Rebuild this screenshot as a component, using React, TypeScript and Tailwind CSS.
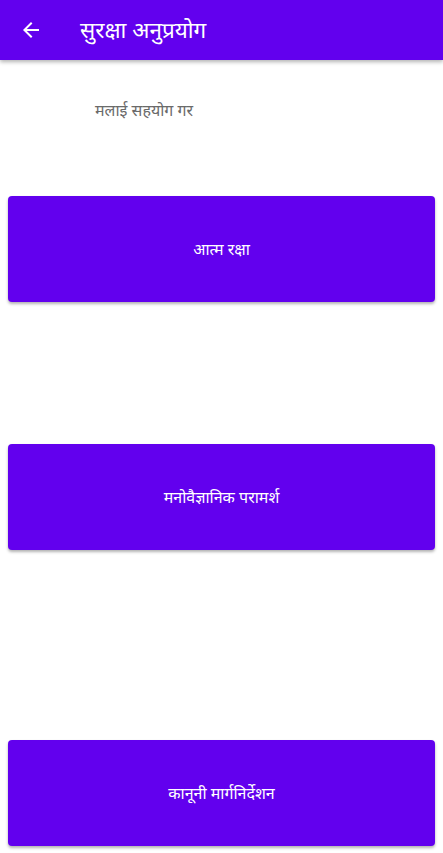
import React from "react";

const font = { fontFamily: '"Noto Sans", "Noto Sans Devanagari", "Lohit Devanagari", Roboto, sans-serif' };

function Btn({ label, className }: { label: string; className: string }) {
  return (
    <div className={`mx-2 h-[106px] rounded-[4px] bg-[#6200ee] flex items-center justify-center text-white text-[16px] shadow-[0_2px_3px_rgba(0,0,0,0.3)] ${className}`}>
      {label}
    </div>
  );
}

export default function App() {
  return (
    <div className="w-[443px] h-[853px] bg-white overflow-hidden flex flex-col" style={font}>
      <div className="h-[60px] bg-[#6200ee] flex items-center shadow-[0_2px_4px_rgba(0,0,0,0.3)] relative z-10">
        <svg width="24" height="24" viewBox="0 0 24 24" className="ml-[19px]" fill="white">
          <path d="M20 11H7.83l5.59-5.59L12 4l-8 8 8 8 1.41-1.41L7.83 13H20v-2z" />
        </svg>
        <div className="ml-[37px] text-white text-[22.5px] leading-none">सुरक्षा अनुप्रयोग</div>
      </div>
      <div className="mt-[38px] ml-[95px] text-[16px] text-[#6a6a6a] leading-[24px]">मलाई सहयोग गर</div>
      <Btn label="आत्म रक्षा" className="mt-[74px]" />
      <Btn label="मनोवैज्ञानिक परामर्श" className="mt-[142px]" />
      <Btn label="कानूनी मार्गनिर्देशन" className="mt-[190px]" />
    </div>
  );
}
